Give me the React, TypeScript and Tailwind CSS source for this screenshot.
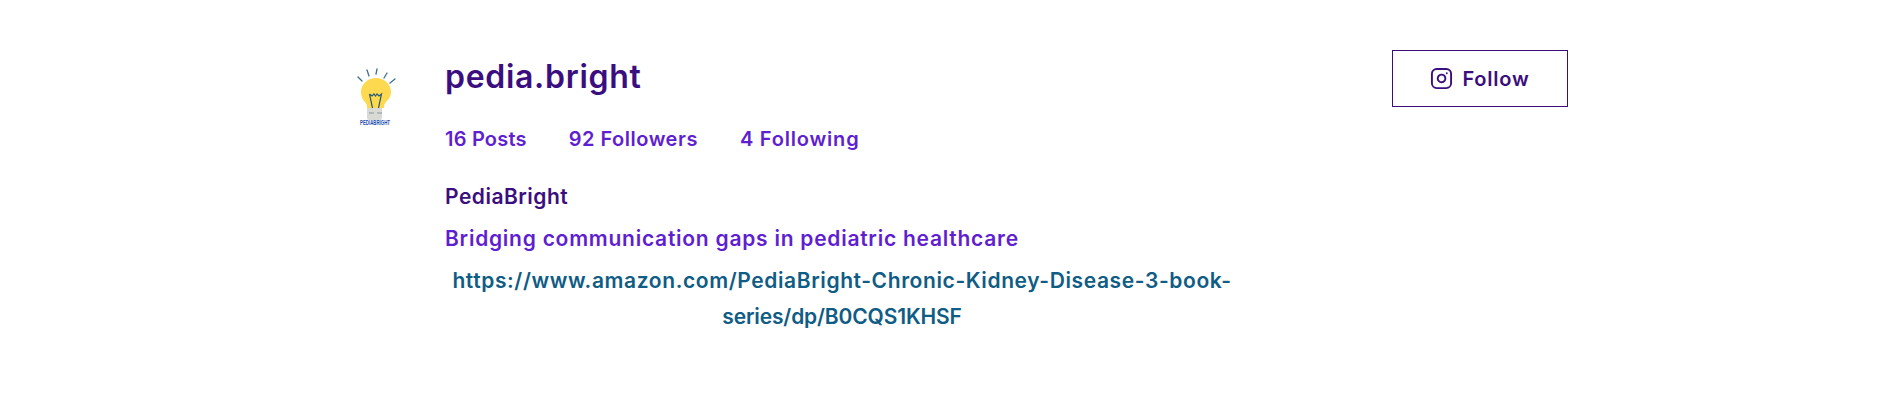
import { Instagram } from 'lucide-react';

function BulbLogo() {
  return (
    <svg width="60" height="70" viewBox="0 0 60 70" className="block">
      {/* rays */}
      <g stroke="#3f6f8f" strokeWidth="1.3" strokeLinecap="round">
        <line x1="12" y1="17" x2="16" y2="21" />
        <line x1="21" y1="10" x2="23" y2="16" />
        <line x1="31" y1="9" x2="30" y2="14" />
        <line x1="41" y1="13" x2="38" y2="18" />
        <line x1="49" y1="19" x2="44" y2="23" />
      </g>
      <rect x="21" y="46" width="15" height="14" rx="2" fill="#d9d9d6" />
      <path d="M30 18c-8 0-15 6-15 14 0 5 2 8 4 10 2 2 2 4 2 6h17c0-2 0-4 2-6 2-2 5-5 5-10 0-8-7-14-15-14z" fill="#fdd94f" />
      <path d="M23.5 34l2.5 2 2-2 1.5 2 1.5-2 2 2 2.5-2-3 14M23.5 34l3 14" fill="none" stroke="#2b5c78" strokeWidth="1.2" />
      <path d="M23 53h5M31 53h5" stroke="#8b98a0" strokeWidth="1" />
      <text x="29" y="65" textAnchor="middle" fontSize="6.6" fontWeight="700" fill="#1d4fb0" fontFamily="'Liberation Sans', sans-serif" textLength="30" lengthAdjust="spacingAndGlyphs">PEDIABRIGHT</text>
    </svg>
  );
}

export default function App() {
  return (
    <div className="h-[400px] bg-white font-['Inter',sans-serif] overflow-hidden">
      <div className="mx-auto w-[1240px] flex pt-[50px]">
        <div className="w-[117px] shrink-0 pl-[18px] pt-[10px]">
          <BulbLogo />
        </div>

        <div className="flex-1 min-w-0">
          <div className="flex items-start justify-between">
            <div>
              <h1 className="text-[32px] leading-[40px] mt-[7px] font-semibold text-[#3b0e80] tracking-[0.7px]">pedia.bright</h1>
              <div className="flex gap-[42px] mt-[27px] text-[20px] leading-[30px] font-semibold text-[#5f1fd1]">
                <span className="tracking-[0.2px]">16 Posts</span>
                <span className="tracking-[0.5px]">92 Followers</span>
                <span className="tracking-[0.8px]">4 Following</span>
              </div>
            </div>
            <button className="w-[176px] h-[57px] border border-[#3b0e80] flex items-center justify-center gap-[9px] text-[20px] font-semibold text-[#3b0e80] tracking-[0.8px]">
              <Instagram className="w-[23px] h-[23px]" strokeWidth={2} />
              Follow
            </button>
          </div>

          <p className="mt-[28px] text-[21px] leading-[30px] font-semibold text-[#3b0e80] tracking-[0.5px]">PediaBright</p>
          <p className="mt-[12px] text-[21px] leading-[30px] font-semibold text-[#5f1fd1] tracking-[0.75px]">Bridging communication gaps in pediatric healthcare</p>
          <p className="mt-[9px] w-[794px] text-center text-[21px] leading-[36px] font-semibold text-[#0f5c85] tracking-[0.6px]">
            https://www.amazon.com/PediaBright-Chronic-Kidney-Disease-3-book-<span className="tracking-[-0.15px]">series/dp/B0CQS1KHSF</span>
          </p>
        </div>
      </div>
    </div>
  );
}
